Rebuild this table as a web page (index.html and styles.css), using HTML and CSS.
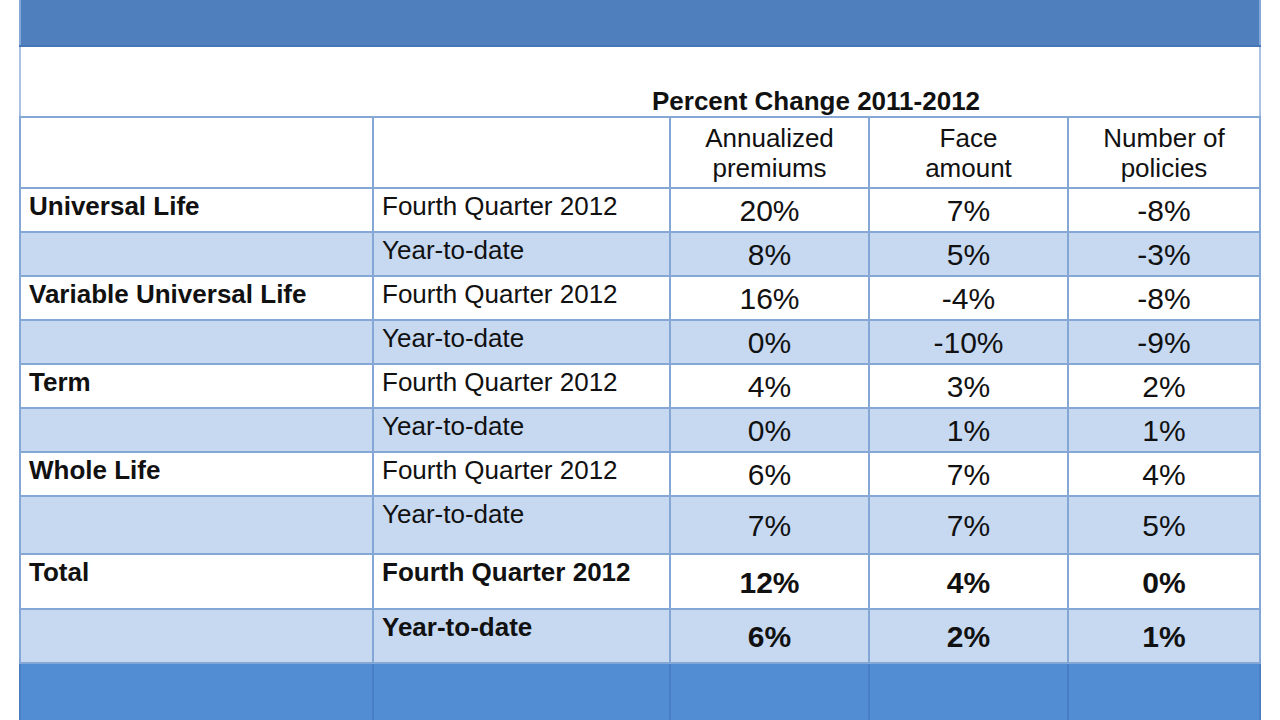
FILE: index.html
```html
<!DOCTYPE html>
<html>
<head>
<meta charset="utf-8">
<link rel="stylesheet" href="styles.css">
</head>
<body>
<table class="data">
  <colgroup>
    <col class="c1"><col class="c2"><col class="c3"><col class="c4"><col class="c5">
  </colgroup>
  <tr class="topbar"><td colspan="5"></td></tr>
  <tr class="title-row">
    <td class="blank"></td>
    <td class="title" colspan="4">Percent Change 2011-2012</td>
  </tr>
  <tr class="head-row">
    <td></td><td></td>
    <td class="head">Annualized<br>premiums</td>
    <td class="head">Face<br>amount</td>
    <td class="head">Number of<br>policies</td>
  </tr>
  <tr class="r44 white">
    <td class="cat">Universal Life</td><td class="per">Fourth Quarter 2012</td>
    <td class="num">20%</td><td class="num">7%</td><td class="num">-8%</td>
  </tr>
  <tr class="r44 shade">
    <td class="cat"></td><td class="per">Year-to-date</td>
    <td class="num">8%</td><td class="num">5%</td><td class="num">-3%</td>
  </tr>
  <tr class="r44 white">
    <td class="cat">Variable Universal Life</td><td class="per">Fourth Quarter 2012</td>
    <td class="num">16%</td><td class="num">-4%</td><td class="num">-8%</td>
  </tr>
  <tr class="r44 shade">
    <td class="cat"></td><td class="per">Year-to-date</td>
    <td class="num">0%</td><td class="num">-10%</td><td class="num">-9%</td>
  </tr>
  <tr class="r44 white">
    <td class="cat">Term</td><td class="per">Fourth Quarter 2012</td>
    <td class="num">4%</td><td class="num">3%</td><td class="num">2%</td>
  </tr>
  <tr class="r44 shade">
    <td class="cat"></td><td class="per">Year-to-date</td>
    <td class="num">0%</td><td class="num">1%</td><td class="num">1%</td>
  </tr>
  <tr class="r44 white">
    <td class="cat">Whole Life</td><td class="per">Fourth Quarter 2012</td>
    <td class="num">6%</td><td class="num">7%</td><td class="num">4%</td>
  </tr>
  <tr class="r58 shade">
    <td class="cat"></td><td class="per">Year-to-date</td>
    <td class="num">7%</td><td class="num">7%</td><td class="num">5%</td>
  </tr>
  <tr class="r55 white total">
    <td class="cat">Total</td><td class="per">Fourth Quarter 2012</td>
    <td class="num">12%</td><td class="num">4%</td><td class="num">0%</td>
  </tr>
  <tr class="r54 shade total">
    <td class="cat"></td><td class="per">Year-to-date</td>
    <td class="num">6%</td><td class="num">2%</td><td class="num">1%</td>
  </tr>
  <tr class="bottombar">
    <td></td><td></td><td></td><td></td><td></td>
  </tr>
</table>
</body>
</html>
```

FILE: styles.css
```css
html, body {
  margin: 0;
  padding: 0;
  background: #ffffff;
  overflow: hidden;
}

body {
  font-family: "Liberation Sans", Arial, sans-serif;
  color: #111111;
}

.data {
  margin-left: 19px;
  width: 1240px;
  table-layout: fixed;
  border-collapse: collapse;
  border-left: 2px solid #a9c2e3;
  border-right: 2px solid #a9c2e3;
}

.c1 { width: 353px; }
.c2 { width: 297px; }
.c3 { width: 199px; }
.c4 { width: 199px; }
.c5 { width: 192px; }

.data td {
  border: 2px solid #84a7d6;
  padding: 0;
  font-size: 26px;
  line-height: 30px;
}

.topbar td {
  height: 45px;
  background: #4f80bd;
  border-top: none;
  border-bottom: 2px solid #4577b8;
}

.title-row td {
  height: 69px;
  background: #ffffff;
  border-left: none;
  border-right: none;
}

.title-row td.blank {
  border-left: 2px solid #a9c2e3;
}

.title {
  font-weight: bold;
  text-align: center;
  vertical-align: bottom;
  line-height: 22px;
  font-size: 26px !important;
}

.head-row td {
  height: 69px;
  background: #ffffff;
}

.head {
  text-align: center;
  vertical-align: middle;
}

.r44 td { height: 40px; }
.r58 td { height: 54px; }
.r55 td { height: 51px; }
.r54 td { height: 50px; }

.white td { background: #ffffff; }
.shade td { background: #c6d9f1; }

.cat {
  font-weight: bold;
  vertical-align: top;
  padding: 2px 0 0 8px !important;
}

.per {
  vertical-align: top;
  padding: 2px 0 0 8px !important;
}

.num {
  text-align: center;
  vertical-align: middle;
  font-size: 30px !important;
  padding-top: 2px !important;
}

.total td {
  font-weight: bold;
}

.bottombar td {
  height: 60px;
  background: #528cd3;
  border-color: #4a7ec4;
  border-bottom: none;
}
```
